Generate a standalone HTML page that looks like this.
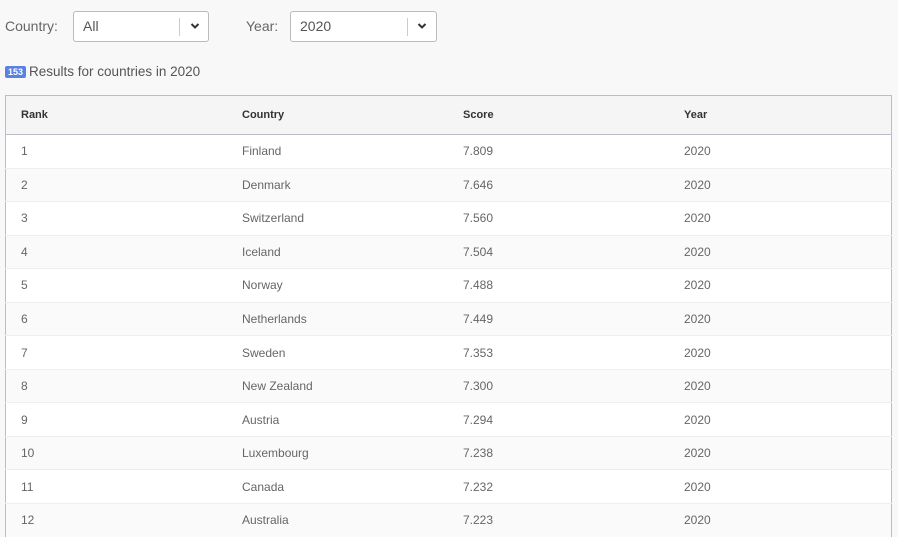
<!DOCTYPE html>
<html><head><meta charset="utf-8"><style>
body{margin:0;width:898px;height:532px;overflow:hidden;background:#f8f8f8;font-family:"Liberation Sans",sans-serif;color:#555;position:relative}
.lbl{position:absolute;top:18px;font-size:14px;color:#666}
.sel{position:absolute;top:11px;height:29px;border:1px solid #bbb;border-radius:3px;background:#fff}
.sel .v{position:absolute;left:9px;top:6px;font-size:14px;color:#555}
.sel .sep{position:absolute;top:6px;width:1px;height:18px;background:#ccc}
.sel svg{position:absolute;top:10px}
.res{position:absolute;top:64px;left:5px;font-size:13.5px;color:#555}
.badge{display:inline-block;background:#5b82e0;color:#fff;font-size:9px;font-weight:bold;padding:1px 3px;border-radius:2px;vertical-align:1px;margin-right:3px}
table{position:absolute;left:5px;top:95px;width:887px;border-collapse:collapse;border:1px solid #bcbcc8;border-bottom:none;background:#fff;font-size:12px}
th{height:38px;text-align:left;font-weight:bold;color:#333;background:#f5f5f5;border-bottom:1px solid #bcbcc8;font-size:11px}
td{height:32.55px;border-top:1px solid #eee;color:#666}
th,td{padding:0 0 0 15px}
tr:nth-child(odd) td{background:#fafafa}
</style></head><body>
<div class="lbl" style="left:5px">Country:</div>
<div class="sel" style="left:73px;width:134px"><span class="v">All</span><div class="sep" style="left:105px"></div><svg style="left:116px" width="10" height="8" viewBox="0 0 10 8"><path d="M1.5 2 L5 5.5 L8.5 2" stroke="#333" stroke-width="2" fill="none"/></svg></div>
<div class="lbl" style="left:246px">Year:</div>
<div class="sel" style="left:290px;width:145px"><span class="v">2020</span><div class="sep" style="left:116px"></div><svg style="left:126px" width="10" height="8" viewBox="0 0 10 8"><path d="M1.5 2 L5 5.5 L8.5 2" stroke="#333" stroke-width="2" fill="none"/></svg></div>
<div class="res"><span class="badge">153</span>Results for countries in 2020</div>
<table>
<tr><th style="width:206px">Rank</th><th style="width:206px">Country</th><th style="width:206px">Score</th><th>Year</th></tr>
<tr><td>1</td><td>Finland</td><td>7.809</td><td>2020</td></tr>
<tr><td>2</td><td>Denmark</td><td>7.646</td><td>2020</td></tr>
<tr><td>3</td><td>Switzerland</td><td>7.560</td><td>2020</td></tr>
<tr><td>4</td><td>Iceland</td><td>7.504</td><td>2020</td></tr>
<tr><td>5</td><td>Norway</td><td>7.488</td><td>2020</td></tr>
<tr><td>6</td><td>Netherlands</td><td>7.449</td><td>2020</td></tr>
<tr><td>7</td><td>Sweden</td><td>7.353</td><td>2020</td></tr>
<tr><td>8</td><td>New Zealand</td><td>7.300</td><td>2020</td></tr>
<tr><td>9</td><td>Austria</td><td>7.294</td><td>2020</td></tr>
<tr><td>10</td><td>Luxembourg</td><td>7.238</td><td>2020</td></tr>
<tr><td>11</td><td>Canada</td><td>7.232</td><td>2020</td></tr>
<tr><td>12</td><td>Australia</td><td>7.223</td><td>2020</td></tr>
</table>
</body></html>
